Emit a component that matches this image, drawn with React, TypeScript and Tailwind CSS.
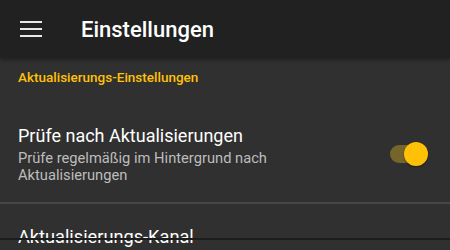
export default function App() {
  return (
    <div className="relative w-[450px] h-[250px] overflow-hidden bg-[#303030] font-['Roboto','Liberation_Sans',sans-serif]">
      <div className="h-[58px] bg-[#212121] flex items-center shadow-[0_2px_4px_rgba(0,0,0,0.35)] relative z-10">
        <div className="ml-5 w-[22px] flex flex-col gap-[5px]">
          <div className="h-[2px] bg-[#e8e8e8]" />
          <div className="h-[2px] bg-[#e8e8e8]" />
          <div className="h-[2px] bg-[#e8e8e8]" />
        </div>
        <h1 className="ml-[39px] text-[22px] font-medium text-white">Einstellungen</h1>
      </div>

      <div className="pl-[18px] pt-[9px] text-[13.5px] leading-[20px] font-medium text-[#ffc107]">
        Aktualisierungs-Einstellungen
      </div>

      <div className="flex items-center pl-[18px] pr-[22px] pt-[37px] pb-[19px]">
        <div className="flex-1">
          <div className="text-[18px] leading-[24px] text-white">Prüfe nach Aktualisierungen</div>
          <div className="mt-[2px] text-[14.7px] leading-[16.5px] text-[#bdbdbd] w-[270px]">
            Prüfe regelmäßig im Hintergrund nach Aktualisierungen
          </div>
        </div>
        <div className="relative w-[38px] h-[24px] flex items-center">
          <div className="w-[32px] h-[18px] rounded-full bg-[#76652a]" />
          <div className="absolute right-0 top-0 w-[24px] h-[24px] rounded-full bg-[#ffc107] shadow-[0_1px_2px_rgba(0,0,0,0.4)]" />
        </div>
      </div>

      <div className="h-[2px] bg-[#474747]" />

      <div className="pl-[18px] pt-[21px] text-[18.2px] leading-[24px] text-white">Aktualisierungs-Kanal</div>

      <div className="absolute left-0 right-0 top-[238px] h-[2px] bg-[#1c1c1c]" />
    </div>
  );
}
